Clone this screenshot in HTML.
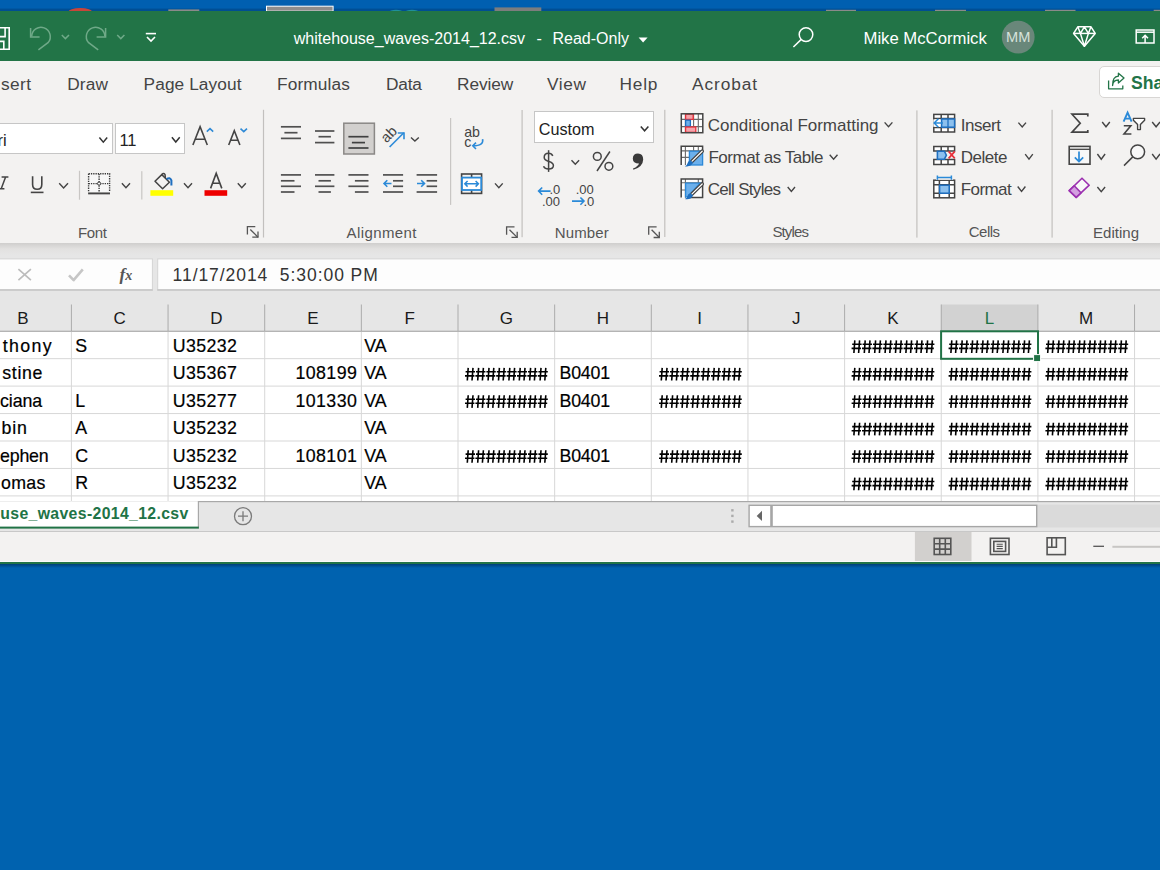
<!DOCTYPE html>
<html><head><meta charset="utf-8">
<style>
*{margin:0;padding:0;box-sizing:border-box}
html,body{width:1160px;height:870px;overflow:hidden;background:#0062af;font-family:"Liberation Sans",sans-serif}
.a{position:absolute}
.t{position:absolute;white-space:pre;line-height:1}
svg{position:absolute;overflow:visible}
</style></head><body>
<div class="a" style="left:0;top:0;width:1160px;height:11px;background:#005fb0"></div>
<div class="a" style="left:0;top:11px;width:1160px;height:50px;background:#227447"></div>
<div class="a" style="left:0;top:61px;width:1160px;height:182px;background:#f3f2f1"></div>
<div class="a" style="left:0;top:243px;width:1160px;height:62px;background:#e6e6e6"></div>
<div class="a" style="left:0;top:243px;width:1160px;height:12px;background:linear-gradient(#cfcecd,#e2e1e0 50%,#e6e6e6)"></div>
<div class="a" style="left:0;top:304px;width:1160px;height:28px;background:#e6e6e6"></div>
<div class="a" style="left:0;top:332px;width:1160px;height:169px;background:#fff"></div>
<div class="a" style="left:0;top:501px;width:1160px;height:31px;background:#e6e6e6;border-top:1px solid #c6c6c6;border-bottom:1px solid #c6c6c6"></div>
<div class="a" style="left:0;top:532px;width:1160px;height:30px;background:#f3f2f1"></div>
<div class="a" style="left:0;top:562px;width:1160px;height:2px;background:#227447"></div>
<div class="a" style="left:0;top:564px;width:1160px;height:4px;background:linear-gradient(#003f7a,#0062af)"></div>
<svg style="left:0;top:0;overflow:hidden" width="1160" height="11">
 <rect x="0" y="8.6" width="1160" height="2.4" fill="#003f7e" opacity="0.55"/>
 <ellipse cx="80.3" cy="12.5" rx="12.2" ry="4.6" fill="#c9453a"/>
 <rect x="168.3" y="9.4" width="31" height="2" fill="#8a8a8a"/>
 <rect x="266.5" y="6.2" width="66.6" height="5" fill="#8c8c8c" stroke="#fff" stroke-width="1"/>
 <ellipse cx="396" cy="12.4" rx="7" ry="2.6" fill="#1f8f9a"/>
 <ellipse cx="412" cy="12.4" rx="7" ry="2.6" fill="#1f8f9a"/>
 <rect x="494.5" y="7.4" width="46.8" height="4" fill="#7d7d7d"/>
 <rect x="826" y="9.8" width="30" height="1.6" fill="#8a8a8a"/>
 <rect x="935" y="9.8" width="31" height="1.6" fill="#8a8a8a"/>
 <rect x="1045" y="9.8" width="30.5" height="1.6" fill="#8a8a8a"/>
 <rect x="1153.7" y="9.8" width="8" height="1.6" fill="#8a8a8a"/>
</svg>
<svg style="left:0;top:0" width="1160" height="61">
 <g fill="none" stroke="#fff" stroke-width="1.6">
  <path d="M-6 27.8 H9.2 V49.2 H-6"/>
  <path d="M-6 28 V36.6 H5.1 V28"/>
  <path d="M-6 41.4 H3.8 V49"/>
 </g>
 <g fill="none" stroke="#6fa988" stroke-width="1.5">
  <path d="M30.6 28 V37 H39.6"/>
  <path d="M31.7 36.4 A9.3 9.3 0 1 1 48.3 42.4 L38.4 49.8"/>
  <path d="M61.8 35 L65.4 38.6 L69 35"/>
  <path d="M105.6 28 V37 H96.6"/>
  <path d="M104.9 36.4 A9.3 9.3 0 1 0 88.3 42.4 L98.2 49.8"/>
  <path d="M117.2 35 L120.8 38.6 L124.4 35"/>
 </g>
 <g fill="none" stroke="#fff" stroke-width="1.6">
  <path d="M145.8 33.6 H156"/>
  <path d="M147 37 L151 41 L155 37"/>
 </g>
 <path d="M638.6 37.5 L647.6 37.5 L643.1 42.5 Z" fill="#fff"/>
 <g fill="none" stroke="#fff" stroke-width="1.5">
  <circle cx="806" cy="34.6" r="6.8"/>
  <path d="M801.3 39.4 L793.4 47"/>
 </g>
 <circle cx="1018.2" cy="37.1" r="16.4" fill="#69877a"/>
 <g fill="none" stroke="#fff" stroke-width="1.5" stroke-linejoin="round">
  <path d="M1077.8 26.8 H1091 L1095.2 33.4 L1084.4 46.2 L1073.6 33.4 Z"/>
  <path d="M1073.6 33.4 H1095.2"/>
  <path d="M1080.4 33.4 L1084.4 46.2 L1088.4 33.4"/>
  <path d="M1077.8 26.8 L1080.4 33.4 L1084.4 26.8 L1088.4 33.4 L1091 26.8"/>
 </g>
 <g fill="none" stroke="#fff" stroke-width="1.5">
  <rect x="1136.2" y="30" width="17.8" height="13"/>
  <path d="M1136.2 32.2 H1154"/>
  <path d="M1145.1 43 V35.4 M1142.2 38.2 L1145.1 35.4 L1148 38.2"/>
 </g>
</svg>
<div class="t" style="left:293.8px;top:31.1px;font-size:16px;color:#fff;">whitehouse_waves-2014_12.csv</div>

<div class="t" style="left:536.5px;top:31.1px;font-size:16px;color:#fff;">-</div>

<div class="t" style="left:552.5px;top:31.1px;font-size:16px;color:#fff;">Read-Only</div>

<div class="t" style="left:863.5px;top:30.7px;font-size:16.7px;color:#fff;">Mike McCormick</div>

<div class="t" style="left:1001.7px;top:29.9px;font-size:14.6px;color:#d6e2da;width:33px;text-align:center;">MM</div>

<div class="t" style="left:1.00px;top:76.16px;font-size:17.3px;color:#444;letter-spacing:0.387px;">sert</div>

<div class="t" style="left:67.20px;top:76.16px;font-size:17.3px;color:#444;letter-spacing:0.129px;">Draw</div>

<div class="t" style="left:143.60px;top:76.16px;font-size:17.3px;color:#444;letter-spacing:0.084px;">Page Layout</div>

<div class="t" style="left:277.00px;top:76.16px;font-size:17.3px;color:#444;letter-spacing:0.128px;">Formulas</div>

<div class="t" style="left:386.00px;top:76.16px;font-size:17.3px;color:#444;letter-spacing:-0.185px;">Data</div>

<div class="t" style="left:457.00px;top:76.16px;font-size:17.3px;color:#444;letter-spacing:-0.096px;">Review</div>

<div class="t" style="left:547.00px;top:76.16px;font-size:17.3px;color:#444;letter-spacing:0.590px;">View</div>

<div class="t" style="left:619.40px;top:76.16px;font-size:17.3px;color:#444;letter-spacing:0.838px;">Help</div>

<div class="t" style="left:692.00px;top:76.16px;font-size:17.3px;color:#444;letter-spacing:0.914px;">Acrobat</div>

<div class="a" style="left:-3px;top:122.9px;width:116px;height:31.3px;background:#fff;border:1.5px solid #c6c6c6"></div><div class="a" style="left:114.8px;top:122.9px;width:70.1px;height:31.1px;background:#fff;border:1.5px solid #c6c6c6"></div><div class="t" style="left:-2.50px;top:131.83px;font-size:16.5px;color:#222;">ri</div>
<div class="t" style="left:119.40px;top:132.13px;font-size:16.5px;color:#222;">11</div>
<div class="t" style="left:78.00px;top:225.20px;font-size:15px;color:#555;letter-spacing:-0.338px;">Font</div>
<div class="t" style="left:346.60px;top:225.00px;font-size:15px;color:#555;letter-spacing:0.387px;">Alignment</div>
<div class="a" style="left:534.2px;top:111.4px;width:119.6px;height:31.7px;background:#fff;border:1.5px solid #c6c6c6"></div><div class="t" style="left:538.70px;top:121.09px;font-size:16.2px;color:#222;letter-spacing:-0.002px;">Custom</div>
<div class="t" style="left:549.50px;top:182.50px;font-size:13px;color:#444;">.0</div>
<div class="t" style="left:541.90px;top:194.60px;font-size:13px;color:#444;">.00</div>
<div class="t" style="left:575.70px;top:182.50px;font-size:13px;color:#444;">.00</div>
<div class="t" style="left:583.50px;top:194.60px;font-size:13px;color:#444;">.0</div>
<div class="t" style="left:554.80px;top:225.10px;font-size:15px;color:#555;letter-spacing:0.109px;">Number</div>
<div class="t" style="left:707.70px;top:116.91px;font-size:17px;color:#444;letter-spacing:-0.007px;">Conditional Formatting</div>
<div class="t" style="left:708.40px;top:148.81px;font-size:17px;color:#444;letter-spacing:-0.469px;">Format as Table</div>
<div class="t" style="left:707.70px;top:181.11px;font-size:17px;color:#444;letter-spacing:-0.701px;">Cell Styles</div>
<div class="t" style="left:772.40px;top:224.20px;font-size:15px;color:#555;letter-spacing:-0.849px;">Styles</div>
<div class="t" style="left:960.70px;top:116.71px;font-size:17px;color:#444;letter-spacing:-0.443px;">Insert</div>
<div class="t" style="left:960.70px;top:148.61px;font-size:17px;color:#444;letter-spacing:-0.489px;">Delete</div>
<div class="t" style="left:960.70px;top:181.11px;font-size:17px;color:#444;letter-spacing:-0.568px;">Format</div>
<div class="t" style="left:968.70px;top:224.30px;font-size:15px;color:#555;letter-spacing:-0.486px;">Cells</div>
<div class="t" style="left:1093.00px;top:225.00px;font-size:15px;color:#555;letter-spacing:0.022px;">Editing</div>
<div class="a" style="left:1098.9px;top:66px;width:90px;height:32.3px;background:#fff;border:1.5px solid #d8d6d4;border-radius:5px"></div><div class="t" style="left:1131.00px;top:75.30px;font-size:17.6px;color:#227447;font-weight:bold;">Share</div>
<svg style="left:0;top:0" width="1160" height="300"><path d="M99.4 137.6 L103.30000000000001 142.2 L107.2 137.6" fill="none" stroke="#333" stroke-width="1.5"/><path d="M171.9 137.3 L175.8 142.0 L179.7 137.3" fill="none" stroke="#333" stroke-width="1.5"/><g fill="none" stroke="#444" stroke-width="1.6"><path d="M192.9 145 L200.1 126.6 L207.3 145 M195.3 139.2 H204.9"/><path d="M228.7 145 L234.3 130.7 L239.9 145 M230.7 140.3 H237.9"/></g><g fill="none" stroke="#2f8ad6" stroke-width="1.6"><path d="M206.8 131.6 L210 128.6 L213.2 131.6"/><path d="M240.5 128.6 L243.75 131.6 L247 128.6"/></g><g fill="none" stroke="#444" stroke-width="1.5"><path d="M1.6 176.9 H8.4 M-2.6 188.8 H4.4 M5.6 176.9 L1.2 188.8"/></g><g fill="none" stroke="#444" stroke-width="1.6"><path d="M32.6 176.2 V184.6 Q32.6 189.3 37.2 189.3 Q41.8 189.3 41.8 184.6 V176.2"/><path d="M30.8 192.4 H43.5"/></g><path d="M59.2 183.2 L63.6 188.0 L68.0 183.2" fill="none" stroke="#444" stroke-width="1.4"/><rect x="78.9" y="170.8" width="1.2" height="28.899999999999977" fill="#c8c6c4"/><rect x="88.6" y="173.8" width="21" height="18.4" fill="#f7f7f7"/><g fill="none" stroke="#3a3a3a" stroke-width="1.4" stroke-dasharray="1.3 1.0"><path d="M88.6 173.8 H109.6 V192 M88.6 173.8 V192"/><path d="M99.1 174 V192 M88.6 183.6 H109.6"/></g><circle cx="99.1" cy="183.6" r="1.6" fill="#f7f7f7" stroke="#3a3a3a" stroke-width="1"/><path d="M88.1 193.4 H110" stroke="#444" stroke-width="1.9"/><path d="M121.9 183.2 L125.95 187.8 L130.0 183.2" fill="none" stroke="#444" stroke-width="1.4"/><rect x="141.2" y="171.2" width="1.2" height="28.30000000000001" fill="#c8c6c4"/><g fill="none" stroke="#444" stroke-width="1.5" stroke-linejoin="round"><path d="M155 181.2 L161.8 174.6 L169.4 182.2 L162.6 188.8 Z"/><path d="M161.8 174.6 Q163.6 172.6 165 174.4 L165.4 178"/></g><path d="M166.6 179.2 Q170 176.6 171.4 180.4 L171.4 185.6" fill="none" stroke="#1e6fc0" stroke-width="2"/><rect x="150.4" y="190.2" width="22.8" height="5.6" fill="#ffff00"/><path d="M184.0 183.2 L188.0 187.8 L192.0 183.2" fill="none" stroke="#444" stroke-width="1.4"/><path d="M210.6 188.4 L216.2 173.4 L221.8 188.4 M212.6 183.2 H219.8" fill="none" stroke="#444" stroke-width="1.6"/><rect x="204.5" y="190.2" width="22.7" height="5.6" fill="#ee0000"/><path d="M237.8 183.2 L241.8 187.8 L245.8 183.2" fill="none" stroke="#444" stroke-width="1.4"/><g fill="none" stroke="#555" stroke-width="1.3"><path d="M247.4 234.5 V226.6 H255.3"/><path d="M250.3 229.5 L258.0 237.2"/><path d="M252.3 237.2 H258.0 V231.5"/></g><rect x="262.9" y="109.8" width="1.2" height="127.7" fill="#c2c0be"/><g fill="none" stroke="#505050" stroke-width="1.7"><path d="M280.9 126.8 H301"/><path d="M284.4 132.7 H297.5"/><path d="M280.9 138.4 H301"/></g><g fill="none" stroke="#505050" stroke-width="1.7"><path d="M315 131 H334.4"/><path d="M318.5 136.7 H330.9"/><path d="M315 142.6 H334.4"/></g><rect x="343.8" y="123.2" width="30.6" height="30.8" fill="#d2d0ce" stroke="#8a8886" stroke-width="1.5"/><g fill="none" stroke="#404040" stroke-width="1.7"><path d="M348.4 136.7 H368.5"/><path d="M351.9 142.6 H365.0"/><path d="M348.4 148 H368.5"/></g><text x="0" y="0" font-size="14.5" fill="#444" transform="translate(386.6 143.4) rotate(-45)" font-family="Liberation Sans">ab</text><g fill="none" stroke="#2b8ad8" stroke-width="1.6"><path d="M389.6 147 L403.8 132.8"/><path d="M397.8 133 H404 V139.2"/></g><path d="M411.0 137.4 L414.9 141.0 L418.8 137.4" fill="none" stroke="#444" stroke-width="1.4"/><g fill="none" stroke="#505050" stroke-width="1.7"><path d="M280.9 174.9 H301"/><path d="M280.9 180.8 H294.5"/><path d="M280.9 186.3 H301"/><path d="M280.9 192 H294.5"/></g><g fill="none" stroke="#505050" stroke-width="1.7"><path d="M315 174.9 H334.4"/><path d="M318.5 180.8 H330.9"/><path d="M315 186.3 H334.4"/><path d="M318.5 192 H330.9"/></g><g fill="none" stroke="#505050" stroke-width="1.7"><path d="M348.4 174.9 H368.5"/><path d="M354.9 180.8 H368.5"/><path d="M348.4 186.3 H368.5"/><path d="M354.9 192 H368.5"/></g><g fill="none" stroke="#505050" stroke-width="1.7"><path d="M383 174.9 H403.1"/><path d="M383 192 H403.1"/></g><g fill="none" stroke="#505050" stroke-width="1.7"><path d="M393 180.8 H403.1"/><path d="M393 186.3 H403.1"/></g><g fill="none" stroke="#2b8ad8" stroke-width="1.6"><path d="M384 183.5 H391.5 M387.3 180.2 L384 183.5 L387.3 186.8"/></g><g fill="none" stroke="#505050" stroke-width="1.7"><path d="M416.6 174.9 H437.1"/><path d="M416.6 192 H437.1"/></g><g fill="none" stroke="#505050" stroke-width="1.7"><path d="M426.6 180.8 H437.1"/><path d="M426.6 186.3 H437.1"/></g><g fill="none" stroke="#2b8ad8" stroke-width="1.6"><path d="M417 183.5 H424.5 M421.2 180.2 L424.5 183.5 L421.2 186.8"/></g><rect x="450.0" y="118" width="1.2" height="86.9" fill="#c8c6c4"/><text x="464.2" y="136.9" font-size="14.2" fill="#444" font-family="Liberation Sans">ab</text><text x="464.2" y="147.4" font-size="14.2" fill="#444" font-family="Liberation Sans">c</text><g fill="none" stroke="#2b8ad8" stroke-width="1.6"><path d="M482.6 139.2 Q484 145.8 473 145.8"/><path d="M476 142.6 L472.8 145.8 L476 149"/></g><g fill="none" stroke="#444" stroke-width="1.6"><rect x="461.6" y="174" width="20" height="19.4"/><path d="M471.6 174 V177.5 M471.6 190 V193.4"/></g><rect x="462" y="177.6" width="19.2" height="12.4" fill="#fff" stroke="#2b8ad8" stroke-width="1.8"/><g fill="none" stroke="#2b8ad8" stroke-width="1.5"><path d="M464.8 183.8 H478.4 M467.6 181 L464.8 183.8 L467.6 186.6 M475.6 181 L478.4 183.8 L475.6 186.6"/></g><path d="M495.0 183.4 L498.85 187.8 L502.7 183.4" fill="none" stroke="#444" stroke-width="1.4"/><g fill="none" stroke="#555" stroke-width="1.3"><path d="M506.6 234.7 V226.79999999999998 H514.5"/><path d="M509.5 229.7 L517.2 237.39999999999998"/><path d="M511.5 237.39999999999998 H517.2 V231.7"/></g><rect x="521.5" y="110" width="1.2" height="127.19999999999999" fill="#c2c0be"/><path d="M640.8 126.4 L644.5999999999999 130.8 L648.4 126.4" fill="none" stroke="#333" stroke-width="1.5"/><g fill="none" stroke="#444" stroke-width="1.5"><path d="M548.6 150.2 V171.9"/><path d="M552.8 155.9 Q551.6 153.2 548.6 153.2 Q544.2 153.2 544.2 157.3 Q544.2 160.4 548.8 161.4 Q553.4 162.6 553.4 165.6 Q553.4 169.1 548.6 169.1 Q544.8 169.1 543.5 166.3"/></g><path d="M571.5 160.2 L575.3 164.2 L579.1 160.2" fill="none" stroke="#444" stroke-width="1.4"/><g fill="none" stroke="#444" stroke-width="1.5"><circle cx="597.3" cy="156.4" r="3.9"/><circle cx="608.9" cy="166.3" r="3.9"/><path d="M609.9 151.5 L597 171"/></g><path d="M638 153.4 Q643.2 153.4 643.2 159.4 Q643 166.6 633.4 169.8 L633 168.6 Q638.4 166 639 163.4 Q632.8 163.4 632.8 158.4 Q633 153.4 638 153.4 Z" fill="#3a3a3a"/><g fill="none" stroke="#2b8ad8" stroke-width="1.6"><path d="M538.6 191.1 H550.6 M542.2 187.5 L538.6 191.1 L542.2 194.7"/></g><g fill="none" stroke="#2b8ad8" stroke-width="1.6"><path d="M572 201.1 H584 M580.4 197.5 L584 201.1 L580.4 204.7"/></g><g fill="none" stroke="#555" stroke-width="1.3"><path d="M648.7 234.8 V226.9 H656.6"/><path d="M651.6 229.8 L659.3000000000001 237.5"/><path d="M653.6 237.5 H659.3000000000001 V231.8"/></g><rect x="664.2" y="109.8" width="1.2" height="127.2" fill="#c2c0be"/><rect x="681.2" y="113.8" width="21.4" height="18.8" fill="#fff"/><g stroke="#6a6a6a" stroke-width="1.1" fill="none"><path d="M685.4 113.8 V132.6 M693.6 113.8 V132.6 M698.3 113.8 V132.6 M681.2 119.4 H702.6 M681.2 126.6 H702.6"/></g><rect x="685.6" y="114.2" width="7.6" height="5.2" fill="#f4a3aa" stroke="#e8303a" stroke-width="1.3"/><rect x="685.6" y="120.2" width="4.8" height="6.2" fill="#6cb0ec" stroke="#1e6fc0" stroke-width="1.3"/><rect x="685.6" y="127" width="10.2" height="5.4" fill="#f4a3aa" stroke="#e8303a" stroke-width="1.3"/><rect x="681.3" y="113.8" width="21.5" height="18.9" fill="none" stroke="#444" stroke-width="1.5"/><path d="M884.6 122.4 L888.5 126.8 L892.4 122.4" fill="none" stroke="#444" stroke-width="1.4"/><rect x="681.2" y="146.2" width="21.4" height="18.8" fill="#fff"/><g stroke="#6a6a6a" stroke-width="1.1" fill="none"><path d="M685.4 146.2 V165 M693.6 146.2 V151 M698.3 146.2 V151 M681.2 150.9 H702.6 M681.2 157.4 H689"/></g><rect x="689.4" y="151.2" width="13.2" height="13.8" fill="#6cb0ec" stroke="#2b88d8" stroke-width="1.3"/><path d="M681.2 165 V146.2 H702.6 V150.6" fill="none" stroke="#444" stroke-width="1.5"/><path d="M702.2 151.2 L691.6 161.6" stroke="#444" stroke-width="3.6" stroke-linecap="round"/><path d="M702.2 151.2 L691.6 161.6" stroke="#fff" stroke-width="1.2" stroke-linecap="round"/><path d="M690.4 160.2 Q687.8 161 687.4 163.4 Q687 165.4 684.8 166.2 Q690.6 167.4 693 162.6 Z" fill="#1e6fc0"/><path d="M829.7 154.8 L833.6 159.2 L837.5 154.8" fill="none" stroke="#444" stroke-width="1.4"/><rect x="681.2" y="179" width="21.4" height="18.8" fill="#fff"/><g stroke="#6a6a6a" stroke-width="1.1" fill="none"><path d="M685.4 179 V197.8 M698.3 179 V183 M681.2 182.8 H702.6 M681.2 190 H685"/></g><path d="M685.6 183.2 H700 L688 196.8 H685.6 Z" fill="#6cb0ec" stroke="#2b88d8" stroke-width="1.3"/><path d="M689 197.6 H702.6 V179 H681.2 V197.6" fill="none" stroke="#444" stroke-width="1.5"/><path d="M702.2 184.0 L691.6 194.39999999999998" stroke="#444" stroke-width="3.6" stroke-linecap="round"/><path d="M702.2 184.0 L691.6 194.39999999999998" stroke="#fff" stroke-width="1.2" stroke-linecap="round"/><path d="M690.4 193.0 Q687.8 193.8 687.4 196.2 Q687 198.2 684.8 199.0 Q690.6 200.2 693 195.39999999999998 Z" fill="#1e6fc0"/><path d="M787.7 187.0 L791.35 191.4 L795.0 187.0" fill="none" stroke="#444" stroke-width="1.4"/><rect x="916.3" y="110.4" width="1.2" height="127.19999999999999" fill="#c2c0be"/><rect x="933.8" y="114.4" width="20.8" height="17.6" fill="#fff" stroke="#444" stroke-width="1.5"/><g stroke="#444" stroke-width="1.5" fill="none"><path d="M941.2 114.4 V132 M948 114.4 V132 M933.8 118.6 H954.6 M933.8 127.6 H954.6"/></g><rect x="933.3" y="119.4" width="8" height="7.4" fill="#fff"/><rect x="941.6" y="119" width="13" height="8.2" fill="#8cc0ee" stroke="#1e6fc0" stroke-width="1.5"/><path d="M948 119 V127.2" stroke="#1e6fc0" stroke-width="1.3"/><g fill="none" stroke="#2b8ad8" stroke-width="1.6"><path d="M934.2 123 H943 M938.4 118.8 L934.2 123 L938.4 127.2"/></g><path d="M1018.4 122.6 L1022.2 127.0 L1026.0 122.6" fill="none" stroke="#444" stroke-width="1.4"/><g stroke="#444" stroke-width="1.5" fill="#fff"><path d="M933.8 151 V146.6 H954.6 V151 Z"/><path d="M933.8 159.4 V164.4 H954.6 V159.4 Z"/><path d="M941.2 146.6 V151 M948 146.6 V151 M941.2 159.4 V164.4 M948 159.4 V164.4" fill="none"/></g><path d="M937.4 151.2 H944.4 L946.4 155.2 L944.4 159.2 H937.4 Z" fill="#8cc0ee" stroke="#1e6fc0" stroke-width="1.6"/><g fill="none" stroke="#e8303a" stroke-width="1.7"><path d="M948.6 151.4 L954.8 158.4 M954.8 151.4 L948.6 158.4"/></g><path d="M1025.2 154.2 L1029.0 159.2 L1032.8 154.2" fill="none" stroke="#444" stroke-width="1.4"/><rect x="933.8" y="180.2" width="20.8" height="17.6" fill="#fff" stroke="#444" stroke-width="1.5"/><g stroke="#444" stroke-width="1.5" fill="none"><path d="M939.4 180.2 V197.8 M949.2 180.2 V197.8 M933.8 184.8 H954.6 M933.8 193.2 H954.6"/></g><rect x="939.6" y="185.2" width="9.6" height="8" fill="#8cc0ee" stroke="#1e6fc0" stroke-width="1.5"/><rect x="936" y="175.8" width="17" height="4" fill="#f3f2f1"/><g fill="none" stroke="#2b8ad8" stroke-width="1.5"><path d="M937.4 177.6 H951.4 M937.4 175.4 V179.8 M951.4 175.4 V179.8"/></g><path d="M1017.7 186.5 L1021.5500000000001 191.4 L1025.4 186.5" fill="none" stroke="#444" stroke-width="1.4"/><rect x="1051.5" y="109.8" width="1.2" height="127.8" fill="#c2c0be"/><path d="M1087.8 116.4 V114.2 H1072 L1080.2 123.2 L1072 132.2 H1087.8 V130" fill="none" stroke="#444" stroke-width="1.7" stroke-linejoin="miter"/><path d="M1102.2 122.0 L1106.0 126.8 L1109.8 122.0" fill="none" stroke="#444" stroke-width="1.4"/><path d="M1123.6 121.6 L1127.6 112.6 L1131.6 121.6 M1125 118.6 H1130.2" fill="none" stroke="#2b8ad8" stroke-width="1.9"/><path d="M1123.8 125.8 H1130.8 L1124 134 H1131.4" fill="none" stroke="#444" stroke-width="1.6"/><path d="M1133.4 118.4 H1144.6 V120.2 L1140.4 124.6 V129.6 H1137.6 V124.6 L1133.4 120.2 Z" fill="#fff" stroke="#444" stroke-width="1.4" stroke-linejoin="round"/><path d="M1152.2 122.0 L1156.1 126.8 L1160 122.0" fill="none" stroke="#444" stroke-width="1.4"/><rect x="1069.2" y="146.4" width="20.8" height="17.8" fill="#f8f8f8" stroke="#444" stroke-width="1.6"/><path d="M1069.2 149.3 H1090" stroke="#444" stroke-width="1.3"/><g fill="none" stroke="#2b8ad8" stroke-width="1.7"><path d="M1079 151.6 V161.6 M1074.8 157.4 L1079 161.6 L1083.2 157.4"/></g><path d="M1097.4 154.0 L1101.25 159.2 L1105.1 154.0" fill="none" stroke="#444" stroke-width="1.4"/><g fill="none" stroke="#444" stroke-width="1.5"><circle cx="1137.7" cy="151.8" r="6.9" fill="#f8f8f8"/><path d="M1133 156.6 L1124 165.6"/></g><path d="M1152.2 154.0 L1156.1 159.2 L1160 154.0" fill="none" stroke="#444" stroke-width="1.4"/><path d="M1082 178.2 L1089.2 185.2 L1076.2 197.4 L1069.2 190.6 Z" fill="#f8f8f8" stroke="#9b30b0" stroke-width="1.6" stroke-linejoin="round"/><path d="M1069.2 190.6 L1074.2 185.8 L1081 192.8 L1076.2 197.4 Z" fill="#d39fe0" stroke="#9b30b0" stroke-width="1.6" stroke-linejoin="round"/><path d="M1097.4 187.0 L1101.25 191.6 L1105.1 187.0" fill="none" stroke="#444" stroke-width="1.4"/><g fill="none" stroke="#227447" stroke-width="1.3" stroke-linejoin="round"><path d="M1108.6 80.4 V88.8 H1122.8 V85.4"/><path d="M1112.6 85.6 Q1112.8 80 1118.4 80 V83 L1124 78 L1118.4 73.2 V76.2 Q1112.4 76.6 1112.6 85.6 Z"/></g></svg>
<svg style="left:0;top:0" width="1160" height="600"><rect x="-4" y="258.9" width="156.4" height="30.8" fill="#fdfdfd" stroke="#d4d4d4" stroke-width="1"/><rect x="157.7" y="258.9" width="1010" height="30.8" fill="#fdfdfd" stroke="#d4d4d4" stroke-width="1"/><rect x="157.2" y="289.4" width="1010" height="1.3" fill="#c2c2c2"/><rect x="-4" y="289.4" width="156.9" height="1.3" fill="#c2c2c2"/><g fill="none" stroke="#bcbcbc" stroke-width="1.7"><path d="M18.4 269.2 L30.9 280.1 M30.9 269.2 L18.4 280.1"/></g><path d="M69 275.4 L73.6 280.2 L82.8 269.4" fill="none" stroke="#c6c6c6" stroke-width="2.6" stroke-linejoin="round"/><text x="119.4" y="279.8" font-size="17.5" font-style="italic" font-weight="bold" fill="#555" font-family="Liberation Serif">f</text><text x="125.2" y="279.8" font-size="14" font-style="italic" font-weight="bold" fill="#555" font-family="Liberation Serif">x</text><rect x="941.25" y="304.5" width="96.65000000000009" height="27" fill="#d2d2d2"/><rect x="70.90" y="304.5" width="1" height="27" fill="#ababab"/><rect x="167.55" y="304.5" width="1" height="27" fill="#ababab"/><rect x="264.20" y="304.5" width="1" height="27" fill="#ababab"/><rect x="360.85" y="304.5" width="1" height="27" fill="#ababab"/><rect x="457.50" y="304.5" width="1" height="27" fill="#ababab"/><rect x="554.15" y="304.5" width="1" height="27" fill="#ababab"/><rect x="650.80" y="304.5" width="1" height="27" fill="#ababab"/><rect x="747.45" y="304.5" width="1" height="27" fill="#ababab"/><rect x="844.10" y="304.5" width="1" height="27" fill="#ababab"/><rect x="940.75" y="304.5" width="1" height="27" fill="#ababab"/><rect x="1037.40" y="304.5" width="1" height="27" fill="#ababab"/><rect x="1134.05" y="304.5" width="1" height="27" fill="#ababab"/><rect x="0" y="330.7" width="1160" height="1.1" fill="#a8a8a8"/><rect x="70.90" y="331.8" width="1" height="169.5" fill="#d8d8d8"/><rect x="167.55" y="331.8" width="1" height="169.5" fill="#d8d8d8"/><rect x="264.20" y="331.8" width="1" height="169.5" fill="#d8d8d8"/><rect x="360.85" y="331.8" width="1" height="169.5" fill="#d8d8d8"/><rect x="457.50" y="331.8" width="1" height="169.5" fill="#d8d8d8"/><rect x="554.15" y="331.8" width="1" height="169.5" fill="#d8d8d8"/><rect x="650.80" y="331.8" width="1" height="169.5" fill="#d8d8d8"/><rect x="747.45" y="331.8" width="1" height="169.5" fill="#d8d8d8"/><rect x="844.10" y="331.8" width="1" height="169.5" fill="#d8d8d8"/><rect x="940.75" y="331.8" width="1" height="169.5" fill="#d8d8d8"/><rect x="1037.40" y="331.8" width="1" height="169.5" fill="#d8d8d8"/><rect x="1134.05" y="331.8" width="1" height="169.5" fill="#d8d8d8"/><rect x="0" y="358.15" width="1160" height="1" fill="#d8d8d8"/><rect x="0" y="385.60" width="1160" height="1" fill="#d8d8d8"/><rect x="0" y="413.05" width="1160" height="1" fill="#d8d8d8"/><rect x="0" y="440.50" width="1160" height="1" fill="#d8d8d8"/><rect x="0" y="467.95" width="1160" height="1" fill="#d8d8d8"/><rect x="0" y="495.40" width="1160" height="1" fill="#d8d8d8"/><g fill="none" stroke="#000" stroke-width="1.6"><path d="M854.80 340.40 L853.90 353.00 M859.60 340.40 L858.60 353.00 M852.20 344.30 H861.60 M851.60 348.40 H861.00"/><path d="M865.20 340.40 L864.30 353.00 M870.00 340.40 L869.00 353.00 M862.60 344.30 H872.00 M862.00 348.40 H871.40"/><path d="M875.60 340.40 L874.70 353.00 M880.40 340.40 L879.40 353.00 M873.00 344.30 H882.40 M872.40 348.40 H881.80"/><path d="M886.00 340.40 L885.10 353.00 M890.80 340.40 L889.80 353.00 M883.40 344.30 H892.80 M882.80 348.40 H892.20"/><path d="M896.40 340.40 L895.50 353.00 M901.20 340.40 L900.20 353.00 M893.80 344.30 H903.20 M893.20 348.40 H902.60"/><path d="M906.80 340.40 L905.90 353.00 M911.60 340.40 L910.60 353.00 M904.20 344.30 H913.60 M903.60 348.40 H913.00"/><path d="M917.20 340.40 L916.30 353.00 M922.00 340.40 L921.00 353.00 M914.60 344.30 H924.00 M914.00 348.40 H923.40"/><path d="M927.60 340.40 L926.70 353.00 M932.40 340.40 L931.40 353.00 M925.00 344.30 H934.40 M924.40 348.40 H933.80"/></g><g fill="none" stroke="#000" stroke-width="1.6"><path d="M951.80 340.40 L950.90 353.00 M956.60 340.40 L955.60 353.00 M949.20 344.30 H958.60 M948.60 348.40 H958.00"/><path d="M962.20 340.40 L961.30 353.00 M967.00 340.40 L966.00 353.00 M959.60 344.30 H969.00 M959.00 348.40 H968.40"/><path d="M972.60 340.40 L971.70 353.00 M977.40 340.40 L976.40 353.00 M970.00 344.30 H979.40 M969.40 348.40 H978.80"/><path d="M983.00 340.40 L982.10 353.00 M987.80 340.40 L986.80 353.00 M980.40 344.30 H989.80 M979.80 348.40 H989.20"/><path d="M993.40 340.40 L992.50 353.00 M998.20 340.40 L997.20 353.00 M990.80 344.30 H1000.20 M990.20 348.40 H999.60"/><path d="M1003.80 340.40 L1002.90 353.00 M1008.60 340.40 L1007.60 353.00 M1001.20 344.30 H1010.60 M1000.60 348.40 H1010.00"/><path d="M1014.20 340.40 L1013.30 353.00 M1019.00 340.40 L1018.00 353.00 M1011.60 344.30 H1021.00 M1011.00 348.40 H1020.40"/><path d="M1024.60 340.40 L1023.70 353.00 M1029.40 340.40 L1028.40 353.00 M1022.00 344.30 H1031.40 M1021.40 348.40 H1030.80"/></g><g fill="none" stroke="#000" stroke-width="1.6"><path d="M1048.60 340.40 L1047.70 353.00 M1053.40 340.40 L1052.40 353.00 M1046.00 344.30 H1055.40 M1045.40 348.40 H1054.80"/><path d="M1059.00 340.40 L1058.10 353.00 M1063.80 340.40 L1062.80 353.00 M1056.40 344.30 H1065.80 M1055.80 348.40 H1065.20"/><path d="M1069.40 340.40 L1068.50 353.00 M1074.20 340.40 L1073.20 353.00 M1066.80 344.30 H1076.20 M1066.20 348.40 H1075.60"/><path d="M1079.80 340.40 L1078.90 353.00 M1084.60 340.40 L1083.60 353.00 M1077.20 344.30 H1086.60 M1076.60 348.40 H1086.00"/><path d="M1090.20 340.40 L1089.30 353.00 M1095.00 340.40 L1094.00 353.00 M1087.60 344.30 H1097.00 M1087.00 348.40 H1096.40"/><path d="M1100.60 340.40 L1099.70 353.00 M1105.40 340.40 L1104.40 353.00 M1098.00 344.30 H1107.40 M1097.40 348.40 H1106.80"/><path d="M1111.00 340.40 L1110.10 353.00 M1115.80 340.40 L1114.80 353.00 M1108.40 344.30 H1117.80 M1107.80 348.40 H1117.20"/><path d="M1121.40 340.40 L1120.50 353.00 M1126.20 340.40 L1125.20 353.00 M1118.80 344.30 H1128.20 M1118.20 348.40 H1127.60"/></g><g fill="none" stroke="#000" stroke-width="1.6"><path d="M468.20 367.85 L467.30 380.45 M473.00 367.85 L472.00 380.45 M465.60 371.75 H475.00 M465.00 375.85 H474.40"/><path d="M478.60 367.85 L477.70 380.45 M483.40 367.85 L482.40 380.45 M476.00 371.75 H485.40 M475.40 375.85 H484.80"/><path d="M489.00 367.85 L488.10 380.45 M493.80 367.85 L492.80 380.45 M486.40 371.75 H495.80 M485.80 375.85 H495.20"/><path d="M499.40 367.85 L498.50 380.45 M504.20 367.85 L503.20 380.45 M496.80 371.75 H506.20 M496.20 375.85 H505.60"/><path d="M509.80 367.85 L508.90 380.45 M514.60 367.85 L513.60 380.45 M507.20 371.75 H516.60 M506.60 375.85 H516.00"/><path d="M520.20 367.85 L519.30 380.45 M525.00 367.85 L524.00 380.45 M517.60 371.75 H527.00 M517.00 375.85 H526.40"/><path d="M530.60 367.85 L529.70 380.45 M535.40 367.85 L534.40 380.45 M528.00 371.75 H537.40 M527.40 375.85 H536.80"/><path d="M541.00 367.85 L540.10 380.45 M545.80 367.85 L544.80 380.45 M538.40 371.75 H547.80 M537.80 375.85 H547.20"/></g><g fill="none" stroke="#000" stroke-width="1.6"><path d="M662.20 367.85 L661.30 380.45 M667.00 367.85 L666.00 380.45 M659.60 371.75 H669.00 M659.00 375.85 H668.40"/><path d="M672.60 367.85 L671.70 380.45 M677.40 367.85 L676.40 380.45 M670.00 371.75 H679.40 M669.40 375.85 H678.80"/><path d="M683.00 367.85 L682.10 380.45 M687.80 367.85 L686.80 380.45 M680.40 371.75 H689.80 M679.80 375.85 H689.20"/><path d="M693.40 367.85 L692.50 380.45 M698.20 367.85 L697.20 380.45 M690.80 371.75 H700.20 M690.20 375.85 H699.60"/><path d="M703.80 367.85 L702.90 380.45 M708.60 367.85 L707.60 380.45 M701.20 371.75 H710.60 M700.60 375.85 H710.00"/><path d="M714.20 367.85 L713.30 380.45 M719.00 367.85 L718.00 380.45 M711.60 371.75 H721.00 M711.00 375.85 H720.40"/><path d="M724.60 367.85 L723.70 380.45 M729.40 367.85 L728.40 380.45 M722.00 371.75 H731.40 M721.40 375.85 H730.80"/><path d="M735.00 367.85 L734.10 380.45 M739.80 367.85 L738.80 380.45 M732.40 371.75 H741.80 M731.80 375.85 H741.20"/></g><g fill="none" stroke="#000" stroke-width="1.6"><path d="M854.80 367.85 L853.90 380.45 M859.60 367.85 L858.60 380.45 M852.20 371.75 H861.60 M851.60 375.85 H861.00"/><path d="M865.20 367.85 L864.30 380.45 M870.00 367.85 L869.00 380.45 M862.60 371.75 H872.00 M862.00 375.85 H871.40"/><path d="M875.60 367.85 L874.70 380.45 M880.40 367.85 L879.40 380.45 M873.00 371.75 H882.40 M872.40 375.85 H881.80"/><path d="M886.00 367.85 L885.10 380.45 M890.80 367.85 L889.80 380.45 M883.40 371.75 H892.80 M882.80 375.85 H892.20"/><path d="M896.40 367.85 L895.50 380.45 M901.20 367.85 L900.20 380.45 M893.80 371.75 H903.20 M893.20 375.85 H902.60"/><path d="M906.80 367.85 L905.90 380.45 M911.60 367.85 L910.60 380.45 M904.20 371.75 H913.60 M903.60 375.85 H913.00"/><path d="M917.20 367.85 L916.30 380.45 M922.00 367.85 L921.00 380.45 M914.60 371.75 H924.00 M914.00 375.85 H923.40"/><path d="M927.60 367.85 L926.70 380.45 M932.40 367.85 L931.40 380.45 M925.00 371.75 H934.40 M924.40 375.85 H933.80"/></g><g fill="none" stroke="#000" stroke-width="1.6"><path d="M951.80 367.85 L950.90 380.45 M956.60 367.85 L955.60 380.45 M949.20 371.75 H958.60 M948.60 375.85 H958.00"/><path d="M962.20 367.85 L961.30 380.45 M967.00 367.85 L966.00 380.45 M959.60 371.75 H969.00 M959.00 375.85 H968.40"/><path d="M972.60 367.85 L971.70 380.45 M977.40 367.85 L976.40 380.45 M970.00 371.75 H979.40 M969.40 375.85 H978.80"/><path d="M983.00 367.85 L982.10 380.45 M987.80 367.85 L986.80 380.45 M980.40 371.75 H989.80 M979.80 375.85 H989.20"/><path d="M993.40 367.85 L992.50 380.45 M998.20 367.85 L997.20 380.45 M990.80 371.75 H1000.20 M990.20 375.85 H999.60"/><path d="M1003.80 367.85 L1002.90 380.45 M1008.60 367.85 L1007.60 380.45 M1001.20 371.75 H1010.60 M1000.60 375.85 H1010.00"/><path d="M1014.20 367.85 L1013.30 380.45 M1019.00 367.85 L1018.00 380.45 M1011.60 371.75 H1021.00 M1011.00 375.85 H1020.40"/><path d="M1024.60 367.85 L1023.70 380.45 M1029.40 367.85 L1028.40 380.45 M1022.00 371.75 H1031.40 M1021.40 375.85 H1030.80"/></g><g fill="none" stroke="#000" stroke-width="1.6"><path d="M1048.60 367.85 L1047.70 380.45 M1053.40 367.85 L1052.40 380.45 M1046.00 371.75 H1055.40 M1045.40 375.85 H1054.80"/><path d="M1059.00 367.85 L1058.10 380.45 M1063.80 367.85 L1062.80 380.45 M1056.40 371.75 H1065.80 M1055.80 375.85 H1065.20"/><path d="M1069.40 367.85 L1068.50 380.45 M1074.20 367.85 L1073.20 380.45 M1066.80 371.75 H1076.20 M1066.20 375.85 H1075.60"/><path d="M1079.80 367.85 L1078.90 380.45 M1084.60 367.85 L1083.60 380.45 M1077.20 371.75 H1086.60 M1076.60 375.85 H1086.00"/><path d="M1090.20 367.85 L1089.30 380.45 M1095.00 367.85 L1094.00 380.45 M1087.60 371.75 H1097.00 M1087.00 375.85 H1096.40"/><path d="M1100.60 367.85 L1099.70 380.45 M1105.40 367.85 L1104.40 380.45 M1098.00 371.75 H1107.40 M1097.40 375.85 H1106.80"/><path d="M1111.00 367.85 L1110.10 380.45 M1115.80 367.85 L1114.80 380.45 M1108.40 371.75 H1117.80 M1107.80 375.85 H1117.20"/><path d="M1121.40 367.85 L1120.50 380.45 M1126.20 367.85 L1125.20 380.45 M1118.80 371.75 H1128.20 M1118.20 375.85 H1127.60"/></g><g fill="none" stroke="#000" stroke-width="1.6"><path d="M468.20 395.30 L467.30 407.90 M473.00 395.30 L472.00 407.90 M465.60 399.20 H475.00 M465.00 403.30 H474.40"/><path d="M478.60 395.30 L477.70 407.90 M483.40 395.30 L482.40 407.90 M476.00 399.20 H485.40 M475.40 403.30 H484.80"/><path d="M489.00 395.30 L488.10 407.90 M493.80 395.30 L492.80 407.90 M486.40 399.20 H495.80 M485.80 403.30 H495.20"/><path d="M499.40 395.30 L498.50 407.90 M504.20 395.30 L503.20 407.90 M496.80 399.20 H506.20 M496.20 403.30 H505.60"/><path d="M509.80 395.30 L508.90 407.90 M514.60 395.30 L513.60 407.90 M507.20 399.20 H516.60 M506.60 403.30 H516.00"/><path d="M520.20 395.30 L519.30 407.90 M525.00 395.30 L524.00 407.90 M517.60 399.20 H527.00 M517.00 403.30 H526.40"/><path d="M530.60 395.30 L529.70 407.90 M535.40 395.30 L534.40 407.90 M528.00 399.20 H537.40 M527.40 403.30 H536.80"/><path d="M541.00 395.30 L540.10 407.90 M545.80 395.30 L544.80 407.90 M538.40 399.20 H547.80 M537.80 403.30 H547.20"/></g><g fill="none" stroke="#000" stroke-width="1.6"><path d="M662.20 395.30 L661.30 407.90 M667.00 395.30 L666.00 407.90 M659.60 399.20 H669.00 M659.00 403.30 H668.40"/><path d="M672.60 395.30 L671.70 407.90 M677.40 395.30 L676.40 407.90 M670.00 399.20 H679.40 M669.40 403.30 H678.80"/><path d="M683.00 395.30 L682.10 407.90 M687.80 395.30 L686.80 407.90 M680.40 399.20 H689.80 M679.80 403.30 H689.20"/><path d="M693.40 395.30 L692.50 407.90 M698.20 395.30 L697.20 407.90 M690.80 399.20 H700.20 M690.20 403.30 H699.60"/><path d="M703.80 395.30 L702.90 407.90 M708.60 395.30 L707.60 407.90 M701.20 399.20 H710.60 M700.60 403.30 H710.00"/><path d="M714.20 395.30 L713.30 407.90 M719.00 395.30 L718.00 407.90 M711.60 399.20 H721.00 M711.00 403.30 H720.40"/><path d="M724.60 395.30 L723.70 407.90 M729.40 395.30 L728.40 407.90 M722.00 399.20 H731.40 M721.40 403.30 H730.80"/><path d="M735.00 395.30 L734.10 407.90 M739.80 395.30 L738.80 407.90 M732.40 399.20 H741.80 M731.80 403.30 H741.20"/></g><g fill="none" stroke="#000" stroke-width="1.6"><path d="M854.80 395.30 L853.90 407.90 M859.60 395.30 L858.60 407.90 M852.20 399.20 H861.60 M851.60 403.30 H861.00"/><path d="M865.20 395.30 L864.30 407.90 M870.00 395.30 L869.00 407.90 M862.60 399.20 H872.00 M862.00 403.30 H871.40"/><path d="M875.60 395.30 L874.70 407.90 M880.40 395.30 L879.40 407.90 M873.00 399.20 H882.40 M872.40 403.30 H881.80"/><path d="M886.00 395.30 L885.10 407.90 M890.80 395.30 L889.80 407.90 M883.40 399.20 H892.80 M882.80 403.30 H892.20"/><path d="M896.40 395.30 L895.50 407.90 M901.20 395.30 L900.20 407.90 M893.80 399.20 H903.20 M893.20 403.30 H902.60"/><path d="M906.80 395.30 L905.90 407.90 M911.60 395.30 L910.60 407.90 M904.20 399.20 H913.60 M903.60 403.30 H913.00"/><path d="M917.20 395.30 L916.30 407.90 M922.00 395.30 L921.00 407.90 M914.60 399.20 H924.00 M914.00 403.30 H923.40"/><path d="M927.60 395.30 L926.70 407.90 M932.40 395.30 L931.40 407.90 M925.00 399.20 H934.40 M924.40 403.30 H933.80"/></g><g fill="none" stroke="#000" stroke-width="1.6"><path d="M951.80 395.30 L950.90 407.90 M956.60 395.30 L955.60 407.90 M949.20 399.20 H958.60 M948.60 403.30 H958.00"/><path d="M962.20 395.30 L961.30 407.90 M967.00 395.30 L966.00 407.90 M959.60 399.20 H969.00 M959.00 403.30 H968.40"/><path d="M972.60 395.30 L971.70 407.90 M977.40 395.30 L976.40 407.90 M970.00 399.20 H979.40 M969.40 403.30 H978.80"/><path d="M983.00 395.30 L982.10 407.90 M987.80 395.30 L986.80 407.90 M980.40 399.20 H989.80 M979.80 403.30 H989.20"/><path d="M993.40 395.30 L992.50 407.90 M998.20 395.30 L997.20 407.90 M990.80 399.20 H1000.20 M990.20 403.30 H999.60"/><path d="M1003.80 395.30 L1002.90 407.90 M1008.60 395.30 L1007.60 407.90 M1001.20 399.20 H1010.60 M1000.60 403.30 H1010.00"/><path d="M1014.20 395.30 L1013.30 407.90 M1019.00 395.30 L1018.00 407.90 M1011.60 399.20 H1021.00 M1011.00 403.30 H1020.40"/><path d="M1024.60 395.30 L1023.70 407.90 M1029.40 395.30 L1028.40 407.90 M1022.00 399.20 H1031.40 M1021.40 403.30 H1030.80"/></g><g fill="none" stroke="#000" stroke-width="1.6"><path d="M1048.60 395.30 L1047.70 407.90 M1053.40 395.30 L1052.40 407.90 M1046.00 399.20 H1055.40 M1045.40 403.30 H1054.80"/><path d="M1059.00 395.30 L1058.10 407.90 M1063.80 395.30 L1062.80 407.90 M1056.40 399.20 H1065.80 M1055.80 403.30 H1065.20"/><path d="M1069.40 395.30 L1068.50 407.90 M1074.20 395.30 L1073.20 407.90 M1066.80 399.20 H1076.20 M1066.20 403.30 H1075.60"/><path d="M1079.80 395.30 L1078.90 407.90 M1084.60 395.30 L1083.60 407.90 M1077.20 399.20 H1086.60 M1076.60 403.30 H1086.00"/><path d="M1090.20 395.30 L1089.30 407.90 M1095.00 395.30 L1094.00 407.90 M1087.60 399.20 H1097.00 M1087.00 403.30 H1096.40"/><path d="M1100.60 395.30 L1099.70 407.90 M1105.40 395.30 L1104.40 407.90 M1098.00 399.20 H1107.40 M1097.40 403.30 H1106.80"/><path d="M1111.00 395.30 L1110.10 407.90 M1115.80 395.30 L1114.80 407.90 M1108.40 399.20 H1117.80 M1107.80 403.30 H1117.20"/><path d="M1121.40 395.30 L1120.50 407.90 M1126.20 395.30 L1125.20 407.90 M1118.80 399.20 H1128.20 M1118.20 403.30 H1127.60"/></g><g fill="none" stroke="#000" stroke-width="1.6"><path d="M854.80 422.75 L853.90 435.35 M859.60 422.75 L858.60 435.35 M852.20 426.65 H861.60 M851.60 430.75 H861.00"/><path d="M865.20 422.75 L864.30 435.35 M870.00 422.75 L869.00 435.35 M862.60 426.65 H872.00 M862.00 430.75 H871.40"/><path d="M875.60 422.75 L874.70 435.35 M880.40 422.75 L879.40 435.35 M873.00 426.65 H882.40 M872.40 430.75 H881.80"/><path d="M886.00 422.75 L885.10 435.35 M890.80 422.75 L889.80 435.35 M883.40 426.65 H892.80 M882.80 430.75 H892.20"/><path d="M896.40 422.75 L895.50 435.35 M901.20 422.75 L900.20 435.35 M893.80 426.65 H903.20 M893.20 430.75 H902.60"/><path d="M906.80 422.75 L905.90 435.35 M911.60 422.75 L910.60 435.35 M904.20 426.65 H913.60 M903.60 430.75 H913.00"/><path d="M917.20 422.75 L916.30 435.35 M922.00 422.75 L921.00 435.35 M914.60 426.65 H924.00 M914.00 430.75 H923.40"/><path d="M927.60 422.75 L926.70 435.35 M932.40 422.75 L931.40 435.35 M925.00 426.65 H934.40 M924.40 430.75 H933.80"/></g><g fill="none" stroke="#000" stroke-width="1.6"><path d="M951.80 422.75 L950.90 435.35 M956.60 422.75 L955.60 435.35 M949.20 426.65 H958.60 M948.60 430.75 H958.00"/><path d="M962.20 422.75 L961.30 435.35 M967.00 422.75 L966.00 435.35 M959.60 426.65 H969.00 M959.00 430.75 H968.40"/><path d="M972.60 422.75 L971.70 435.35 M977.40 422.75 L976.40 435.35 M970.00 426.65 H979.40 M969.40 430.75 H978.80"/><path d="M983.00 422.75 L982.10 435.35 M987.80 422.75 L986.80 435.35 M980.40 426.65 H989.80 M979.80 430.75 H989.20"/><path d="M993.40 422.75 L992.50 435.35 M998.20 422.75 L997.20 435.35 M990.80 426.65 H1000.20 M990.20 430.75 H999.60"/><path d="M1003.80 422.75 L1002.90 435.35 M1008.60 422.75 L1007.60 435.35 M1001.20 426.65 H1010.60 M1000.60 430.75 H1010.00"/><path d="M1014.20 422.75 L1013.30 435.35 M1019.00 422.75 L1018.00 435.35 M1011.60 426.65 H1021.00 M1011.00 430.75 H1020.40"/><path d="M1024.60 422.75 L1023.70 435.35 M1029.40 422.75 L1028.40 435.35 M1022.00 426.65 H1031.40 M1021.40 430.75 H1030.80"/></g><g fill="none" stroke="#000" stroke-width="1.6"><path d="M1048.60 422.75 L1047.70 435.35 M1053.40 422.75 L1052.40 435.35 M1046.00 426.65 H1055.40 M1045.40 430.75 H1054.80"/><path d="M1059.00 422.75 L1058.10 435.35 M1063.80 422.75 L1062.80 435.35 M1056.40 426.65 H1065.80 M1055.80 430.75 H1065.20"/><path d="M1069.40 422.75 L1068.50 435.35 M1074.20 422.75 L1073.20 435.35 M1066.80 426.65 H1076.20 M1066.20 430.75 H1075.60"/><path d="M1079.80 422.75 L1078.90 435.35 M1084.60 422.75 L1083.60 435.35 M1077.20 426.65 H1086.60 M1076.60 430.75 H1086.00"/><path d="M1090.20 422.75 L1089.30 435.35 M1095.00 422.75 L1094.00 435.35 M1087.60 426.65 H1097.00 M1087.00 430.75 H1096.40"/><path d="M1100.60 422.75 L1099.70 435.35 M1105.40 422.75 L1104.40 435.35 M1098.00 426.65 H1107.40 M1097.40 430.75 H1106.80"/><path d="M1111.00 422.75 L1110.10 435.35 M1115.80 422.75 L1114.80 435.35 M1108.40 426.65 H1117.80 M1107.80 430.75 H1117.20"/><path d="M1121.40 422.75 L1120.50 435.35 M1126.20 422.75 L1125.20 435.35 M1118.80 426.65 H1128.20 M1118.20 430.75 H1127.60"/></g><g fill="none" stroke="#000" stroke-width="1.6"><path d="M468.20 450.20 L467.30 462.80 M473.00 450.20 L472.00 462.80 M465.60 454.10 H475.00 M465.00 458.20 H474.40"/><path d="M478.60 450.20 L477.70 462.80 M483.40 450.20 L482.40 462.80 M476.00 454.10 H485.40 M475.40 458.20 H484.80"/><path d="M489.00 450.20 L488.10 462.80 M493.80 450.20 L492.80 462.80 M486.40 454.10 H495.80 M485.80 458.20 H495.20"/><path d="M499.40 450.20 L498.50 462.80 M504.20 450.20 L503.20 462.80 M496.80 454.10 H506.20 M496.20 458.20 H505.60"/><path d="M509.80 450.20 L508.90 462.80 M514.60 450.20 L513.60 462.80 M507.20 454.10 H516.60 M506.60 458.20 H516.00"/><path d="M520.20 450.20 L519.30 462.80 M525.00 450.20 L524.00 462.80 M517.60 454.10 H527.00 M517.00 458.20 H526.40"/><path d="M530.60 450.20 L529.70 462.80 M535.40 450.20 L534.40 462.80 M528.00 454.10 H537.40 M527.40 458.20 H536.80"/><path d="M541.00 450.20 L540.10 462.80 M545.80 450.20 L544.80 462.80 M538.40 454.10 H547.80 M537.80 458.20 H547.20"/></g><g fill="none" stroke="#000" stroke-width="1.6"><path d="M662.20 450.20 L661.30 462.80 M667.00 450.20 L666.00 462.80 M659.60 454.10 H669.00 M659.00 458.20 H668.40"/><path d="M672.60 450.20 L671.70 462.80 M677.40 450.20 L676.40 462.80 M670.00 454.10 H679.40 M669.40 458.20 H678.80"/><path d="M683.00 450.20 L682.10 462.80 M687.80 450.20 L686.80 462.80 M680.40 454.10 H689.80 M679.80 458.20 H689.20"/><path d="M693.40 450.20 L692.50 462.80 M698.20 450.20 L697.20 462.80 M690.80 454.10 H700.20 M690.20 458.20 H699.60"/><path d="M703.80 450.20 L702.90 462.80 M708.60 450.20 L707.60 462.80 M701.20 454.10 H710.60 M700.60 458.20 H710.00"/><path d="M714.20 450.20 L713.30 462.80 M719.00 450.20 L718.00 462.80 M711.60 454.10 H721.00 M711.00 458.20 H720.40"/><path d="M724.60 450.20 L723.70 462.80 M729.40 450.20 L728.40 462.80 M722.00 454.10 H731.40 M721.40 458.20 H730.80"/><path d="M735.00 450.20 L734.10 462.80 M739.80 450.20 L738.80 462.80 M732.40 454.10 H741.80 M731.80 458.20 H741.20"/></g><g fill="none" stroke="#000" stroke-width="1.6"><path d="M854.80 450.20 L853.90 462.80 M859.60 450.20 L858.60 462.80 M852.20 454.10 H861.60 M851.60 458.20 H861.00"/><path d="M865.20 450.20 L864.30 462.80 M870.00 450.20 L869.00 462.80 M862.60 454.10 H872.00 M862.00 458.20 H871.40"/><path d="M875.60 450.20 L874.70 462.80 M880.40 450.20 L879.40 462.80 M873.00 454.10 H882.40 M872.40 458.20 H881.80"/><path d="M886.00 450.20 L885.10 462.80 M890.80 450.20 L889.80 462.80 M883.40 454.10 H892.80 M882.80 458.20 H892.20"/><path d="M896.40 450.20 L895.50 462.80 M901.20 450.20 L900.20 462.80 M893.80 454.10 H903.20 M893.20 458.20 H902.60"/><path d="M906.80 450.20 L905.90 462.80 M911.60 450.20 L910.60 462.80 M904.20 454.10 H913.60 M903.60 458.20 H913.00"/><path d="M917.20 450.20 L916.30 462.80 M922.00 450.20 L921.00 462.80 M914.60 454.10 H924.00 M914.00 458.20 H923.40"/><path d="M927.60 450.20 L926.70 462.80 M932.40 450.20 L931.40 462.80 M925.00 454.10 H934.40 M924.40 458.20 H933.80"/></g><g fill="none" stroke="#000" stroke-width="1.6"><path d="M951.80 450.20 L950.90 462.80 M956.60 450.20 L955.60 462.80 M949.20 454.10 H958.60 M948.60 458.20 H958.00"/><path d="M962.20 450.20 L961.30 462.80 M967.00 450.20 L966.00 462.80 M959.60 454.10 H969.00 M959.00 458.20 H968.40"/><path d="M972.60 450.20 L971.70 462.80 M977.40 450.20 L976.40 462.80 M970.00 454.10 H979.40 M969.40 458.20 H978.80"/><path d="M983.00 450.20 L982.10 462.80 M987.80 450.20 L986.80 462.80 M980.40 454.10 H989.80 M979.80 458.20 H989.20"/><path d="M993.40 450.20 L992.50 462.80 M998.20 450.20 L997.20 462.80 M990.80 454.10 H1000.20 M990.20 458.20 H999.60"/><path d="M1003.80 450.20 L1002.90 462.80 M1008.60 450.20 L1007.60 462.80 M1001.20 454.10 H1010.60 M1000.60 458.20 H1010.00"/><path d="M1014.20 450.20 L1013.30 462.80 M1019.00 450.20 L1018.00 462.80 M1011.60 454.10 H1021.00 M1011.00 458.20 H1020.40"/><path d="M1024.60 450.20 L1023.70 462.80 M1029.40 450.20 L1028.40 462.80 M1022.00 454.10 H1031.40 M1021.40 458.20 H1030.80"/></g><g fill="none" stroke="#000" stroke-width="1.6"><path d="M1048.60 450.20 L1047.70 462.80 M1053.40 450.20 L1052.40 462.80 M1046.00 454.10 H1055.40 M1045.40 458.20 H1054.80"/><path d="M1059.00 450.20 L1058.10 462.80 M1063.80 450.20 L1062.80 462.80 M1056.40 454.10 H1065.80 M1055.80 458.20 H1065.20"/><path d="M1069.40 450.20 L1068.50 462.80 M1074.20 450.20 L1073.20 462.80 M1066.80 454.10 H1076.20 M1066.20 458.20 H1075.60"/><path d="M1079.80 450.20 L1078.90 462.80 M1084.60 450.20 L1083.60 462.80 M1077.20 454.10 H1086.60 M1076.60 458.20 H1086.00"/><path d="M1090.20 450.20 L1089.30 462.80 M1095.00 450.20 L1094.00 462.80 M1087.60 454.10 H1097.00 M1087.00 458.20 H1096.40"/><path d="M1100.60 450.20 L1099.70 462.80 M1105.40 450.20 L1104.40 462.80 M1098.00 454.10 H1107.40 M1097.40 458.20 H1106.80"/><path d="M1111.00 450.20 L1110.10 462.80 M1115.80 450.20 L1114.80 462.80 M1108.40 454.10 H1117.80 M1107.80 458.20 H1117.20"/><path d="M1121.40 450.20 L1120.50 462.80 M1126.20 450.20 L1125.20 462.80 M1118.80 454.10 H1128.20 M1118.20 458.20 H1127.60"/></g><g fill="none" stroke="#000" stroke-width="1.6"><path d="M854.80 477.65 L853.90 490.25 M859.60 477.65 L858.60 490.25 M852.20 481.55 H861.60 M851.60 485.65 H861.00"/><path d="M865.20 477.65 L864.30 490.25 M870.00 477.65 L869.00 490.25 M862.60 481.55 H872.00 M862.00 485.65 H871.40"/><path d="M875.60 477.65 L874.70 490.25 M880.40 477.65 L879.40 490.25 M873.00 481.55 H882.40 M872.40 485.65 H881.80"/><path d="M886.00 477.65 L885.10 490.25 M890.80 477.65 L889.80 490.25 M883.40 481.55 H892.80 M882.80 485.65 H892.20"/><path d="M896.40 477.65 L895.50 490.25 M901.20 477.65 L900.20 490.25 M893.80 481.55 H903.20 M893.20 485.65 H902.60"/><path d="M906.80 477.65 L905.90 490.25 M911.60 477.65 L910.60 490.25 M904.20 481.55 H913.60 M903.60 485.65 H913.00"/><path d="M917.20 477.65 L916.30 490.25 M922.00 477.65 L921.00 490.25 M914.60 481.55 H924.00 M914.00 485.65 H923.40"/><path d="M927.60 477.65 L926.70 490.25 M932.40 477.65 L931.40 490.25 M925.00 481.55 H934.40 M924.40 485.65 H933.80"/></g><g fill="none" stroke="#000" stroke-width="1.6"><path d="M951.80 477.65 L950.90 490.25 M956.60 477.65 L955.60 490.25 M949.20 481.55 H958.60 M948.60 485.65 H958.00"/><path d="M962.20 477.65 L961.30 490.25 M967.00 477.65 L966.00 490.25 M959.60 481.55 H969.00 M959.00 485.65 H968.40"/><path d="M972.60 477.65 L971.70 490.25 M977.40 477.65 L976.40 490.25 M970.00 481.55 H979.40 M969.40 485.65 H978.80"/><path d="M983.00 477.65 L982.10 490.25 M987.80 477.65 L986.80 490.25 M980.40 481.55 H989.80 M979.80 485.65 H989.20"/><path d="M993.40 477.65 L992.50 490.25 M998.20 477.65 L997.20 490.25 M990.80 481.55 H1000.20 M990.20 485.65 H999.60"/><path d="M1003.80 477.65 L1002.90 490.25 M1008.60 477.65 L1007.60 490.25 M1001.20 481.55 H1010.60 M1000.60 485.65 H1010.00"/><path d="M1014.20 477.65 L1013.30 490.25 M1019.00 477.65 L1018.00 490.25 M1011.60 481.55 H1021.00 M1011.00 485.65 H1020.40"/><path d="M1024.60 477.65 L1023.70 490.25 M1029.40 477.65 L1028.40 490.25 M1022.00 481.55 H1031.40 M1021.40 485.65 H1030.80"/></g><g fill="none" stroke="#000" stroke-width="1.6"><path d="M1048.60 477.65 L1047.70 490.25 M1053.40 477.65 L1052.40 490.25 M1046.00 481.55 H1055.40 M1045.40 485.65 H1054.80"/><path d="M1059.00 477.65 L1058.10 490.25 M1063.80 477.65 L1062.80 490.25 M1056.40 481.55 H1065.80 M1055.80 485.65 H1065.20"/><path d="M1069.40 477.65 L1068.50 490.25 M1074.20 477.65 L1073.20 490.25 M1066.80 481.55 H1076.20 M1066.20 485.65 H1075.60"/><path d="M1079.80 477.65 L1078.90 490.25 M1084.60 477.65 L1083.60 490.25 M1077.20 481.55 H1086.60 M1076.60 485.65 H1086.00"/><path d="M1090.20 477.65 L1089.30 490.25 M1095.00 477.65 L1094.00 490.25 M1087.60 481.55 H1097.00 M1087.00 485.65 H1096.40"/><path d="M1100.60 477.65 L1099.70 490.25 M1105.40 477.65 L1104.40 490.25 M1098.00 481.55 H1107.40 M1097.40 485.65 H1106.80"/><path d="M1111.00 477.65 L1110.10 490.25 M1115.80 477.65 L1114.80 490.25 M1108.40 481.55 H1117.80 M1107.80 485.65 H1117.20"/><path d="M1121.40 477.65 L1120.50 490.25 M1126.20 477.65 L1125.20 490.25 M1118.80 481.55 H1128.20 M1118.20 485.65 H1127.60"/></g><rect x="941.1" y="331.3" width="96.9" height="27.5" fill="none" stroke="#217346" stroke-width="2"/><rect x="1033.6" y="354.6" width="7" height="7" fill="#217346" stroke="#fff" stroke-width="1"/><rect x="0" y="501.3" width="198.6" height="26" fill="#fff"/><rect x="198.2" y="501" width="962" height="1.2" fill="#a8a8a8"/><rect x="197.8" y="501" width="1.2" height="27.4" fill="#a8a8a8"/><rect x="0" y="526.6" width="198.8" height="2" fill="#217346"/><rect x="0" y="531" width="1160" height="1" fill="#c8c8c8"/><g fill="none" stroke="#7a7a7a" stroke-width="1.3"><circle cx="243" cy="516.2" r="8.5"/><path d="M238 516.2 H248 M243 511.2 V521.2"/></g><g fill="#ababab"><rect x="731.2" y="509.1" width="2.4" height="2.4"/><rect x="731.2" y="514.7" width="2.4" height="2.4"/><rect x="731.2" y="520.4" width="2.4" height="2.4"/></g><rect x="1036.5" y="504.6" width="124" height="22.9" fill="#dadada"/><rect x="749.1" y="505.3" width="287.6" height="21.3" fill="#fff" stroke="#a6a6a6" stroke-width="1.4"/><rect x="770.2" y="505.3" width="2.6" height="21.3" fill="#a6a6a6"/><path d="M762 510.8 V521.1 L756.7 516 Z" fill="#666"/><rect x="914.9" y="532" width="56.6" height="30" fill="#d2d0ce"/><g fill="none" stroke="#555" stroke-width="1.6"><rect x="934.2" y="538.3" width="16.6" height="16.2"/><path d="M939.7 538.3 V554.5 M945.3 538.3 V554.5 M934.2 543.7 H950.8 M934.2 549.1 H950.8"/><rect x="990.4" y="538.3" width="18.6" height="16.2"/><rect x="993.8" y="541.4" width="11.8" height="10"/><path d="M996.6 544.2 H1002.8 M996.6 546.4 H1002.8 M996.6 548.6 H1002.8" stroke-width="1.1"/><rect x="1047.1" y="537.8" width="18.2" height="16.8"/><path d="M1047.1 547.2 H1056.4 V537.8 M1051.8 537.8 V547.2"/><path d="M1093.3 546.3 H1104" stroke-width="1.3"/></g><rect x="1112.4" y="545.8" width="60" height="2" fill="#c8c6c4"/><rect x="0" y="561" width="1160" height="1" fill="#fbfafa"/></svg><div class="t" style="left:172.60px;top:267.29px;font-size:17.5px;color:#333;letter-spacing:0.937px;">11/17/2014  5:30:00 PM</div>
<div class="t" style="left:-7.0px;top:310.2px;width:60px;text-align:center;font-size:17px;color:#1a1a1a">B</div>
<div class="t" style="left:89.7px;top:310.2px;width:60px;text-align:center;font-size:17px;color:#1a1a1a">C</div>
<div class="t" style="left:186.4px;top:310.2px;width:60px;text-align:center;font-size:17px;color:#1a1a1a">D</div>
<div class="t" style="left:283.0px;top:310.2px;width:60px;text-align:center;font-size:17px;color:#1a1a1a">E</div>
<div class="t" style="left:379.7px;top:310.2px;width:60px;text-align:center;font-size:17px;color:#1a1a1a">F</div>
<div class="t" style="left:476.3px;top:310.2px;width:60px;text-align:center;font-size:17px;color:#1a1a1a">G</div>
<div class="t" style="left:573.0px;top:310.2px;width:60px;text-align:center;font-size:17px;color:#1a1a1a">H</div>
<div class="t" style="left:669.6px;top:310.2px;width:60px;text-align:center;font-size:17px;color:#1a1a1a">I</div>
<div class="t" style="left:766.3px;top:310.2px;width:60px;text-align:center;font-size:17px;color:#1a1a1a">J</div>
<div class="t" style="left:862.9px;top:310.2px;width:60px;text-align:center;font-size:17px;color:#1a1a1a">K</div>
<div class="t" style="left:959.6px;top:310.2px;width:60px;text-align:center;font-size:17px;color:#217346">L</div>
<div class="t" style="left:1056.2px;top:310.2px;width:60px;text-align:center;font-size:17px;color:#1a1a1a">M</div>
<div class="t" style="left:2.70px;top:337.93px;font-size:17.8px;color:#000;letter-spacing:1.390px;-webkit-text-stroke:0.2px #000;">thony</div>
<div class="t" style="left:75.20px;top:337.93px;font-size:17.8px;color:#000;-webkit-text-stroke:0.2px #000;">S</div>
<div class="t" style="left:172.70px;top:337.93px;font-size:17.8px;color:#000;letter-spacing:0.389px;-webkit-text-stroke:0.2px #000;">U35232</div>
<div class="t" style="left:364.20px;top:337.93px;font-size:17.8px;color:#000;-webkit-text-stroke:0.2px #000;">VA</div>
<div class="t" style="left:2.30px;top:365.38px;font-size:17.8px;color:#000;letter-spacing:0.652px;-webkit-text-stroke:0.2px #000;">stine</div>
<div class="t" style="left:172.70px;top:365.38px;font-size:17.8px;color:#000;letter-spacing:0.389px;-webkit-text-stroke:0.2px #000;">U35367</div>
<div class="t" style="left:295.40px;top:365.38px;font-size:17.8px;color:#000;letter-spacing:0.420px;-webkit-text-stroke:0.2px #000;">108199</div>
<div class="t" style="left:364.20px;top:365.38px;font-size:17.8px;color:#000;-webkit-text-stroke:0.2px #000;">VA</div>
<div class="t" style="left:559.50px;top:365.38px;font-size:17.8px;color:#000;letter-spacing:-0.194px;-webkit-text-stroke:0.2px #000;">B0401</div>
<div class="t" style="left:0.00px;top:392.83px;font-size:17.8px;color:#000;letter-spacing:-0.090px;-webkit-text-stroke:0.2px #000;">ciana</div>
<div class="t" style="left:75.20px;top:392.83px;font-size:17.8px;color:#000;-webkit-text-stroke:0.2px #000;">L</div>
<div class="t" style="left:172.70px;top:392.83px;font-size:17.8px;color:#000;letter-spacing:0.389px;-webkit-text-stroke:0.2px #000;">U35277</div>
<div class="t" style="left:295.40px;top:392.83px;font-size:17.8px;color:#000;letter-spacing:0.420px;-webkit-text-stroke:0.2px #000;">101330</div>
<div class="t" style="left:364.20px;top:392.83px;font-size:17.8px;color:#000;-webkit-text-stroke:0.2px #000;">VA</div>
<div class="t" style="left:559.50px;top:392.83px;font-size:17.8px;color:#000;letter-spacing:-0.194px;-webkit-text-stroke:0.2px #000;">B0401</div>
<div class="t" style="left:1.50px;top:420.28px;font-size:17.8px;color:#000;letter-spacing:0.877px;-webkit-text-stroke:0.2px #000;">bin</div>
<div class="t" style="left:75.20px;top:420.28px;font-size:17.8px;color:#000;-webkit-text-stroke:0.2px #000;">A</div>
<div class="t" style="left:172.70px;top:420.28px;font-size:17.8px;color:#000;letter-spacing:0.389px;-webkit-text-stroke:0.2px #000;">U35232</div>
<div class="t" style="left:364.20px;top:420.28px;font-size:17.8px;color:#000;-webkit-text-stroke:0.2px #000;">VA</div>
<div class="t" style="left:0.00px;top:447.73px;font-size:17.8px;color:#000;letter-spacing:-0.200px;-webkit-text-stroke:0.2px #000;">ephen</div>
<div class="t" style="left:75.20px;top:447.73px;font-size:17.8px;color:#000;-webkit-text-stroke:0.2px #000;">C</div>
<div class="t" style="left:172.70px;top:447.73px;font-size:17.8px;color:#000;letter-spacing:0.389px;-webkit-text-stroke:0.2px #000;">U35232</div>
<div class="t" style="left:295.40px;top:447.73px;font-size:17.8px;color:#000;letter-spacing:0.420px;-webkit-text-stroke:0.2px #000;">108101</div>
<div class="t" style="left:364.20px;top:447.73px;font-size:17.8px;color:#000;-webkit-text-stroke:0.2px #000;">VA</div>
<div class="t" style="left:559.50px;top:447.73px;font-size:17.8px;color:#000;letter-spacing:-0.194px;-webkit-text-stroke:0.2px #000;">B0401</div>
<div class="t" style="left:1.00px;top:475.18px;font-size:17.8px;color:#000;letter-spacing:0.293px;-webkit-text-stroke:0.2px #000;">omas</div>
<div class="t" style="left:75.20px;top:475.18px;font-size:17.8px;color:#000;-webkit-text-stroke:0.2px #000;">R</div>
<div class="t" style="left:172.70px;top:475.18px;font-size:17.8px;color:#000;letter-spacing:0.389px;-webkit-text-stroke:0.2px #000;">U35232</div>
<div class="t" style="left:364.20px;top:475.18px;font-size:17.8px;color:#000;-webkit-text-stroke:0.2px #000;">VA</div>
<div class="t" style="left:0.30px;top:506.03px;font-size:15.8px;color:#217346;letter-spacing:0.351px;font-weight:bold;">use_waves-2014_12.csv</div>

</body></html>
